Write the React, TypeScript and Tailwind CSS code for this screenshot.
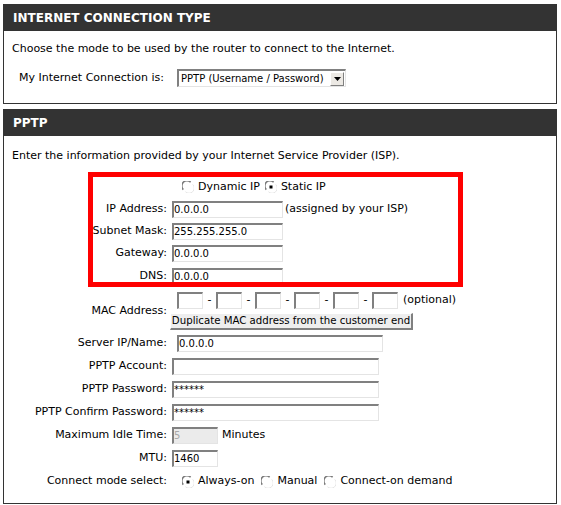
import React from "react";

const FONT = { fontFamily: '"DejaVu Sans", Verdana, sans-serif' };

function Radio({ checked }: { checked?: boolean }) {
  return (
    <svg width="12" height="12" viewBox="0 0 12 12" className="shrink-0">
      <circle cx="6" cy="6" r="5.5" fill="#ffffff" />
      <path d="M1.3 8.6 A5 5 0 0 1 8.6 1.3" stroke="#7a7a7a" strokeWidth="1.6" fill="none" />
      <path d="M10.7 3.4 A5 5 0 0 1 3.4 10.7" stroke="#e6e6e6" strokeWidth="1" fill="none" />
      {checked && <rect x="4.5" y="4.5" width="3" height="3" fill="#000000" />}
    </svg>
  );
}

function TextBox({
  value = "",
  width,
  disabled,
  className = "",
}: {
  value?: string;
  width: string;
  disabled?: boolean;
  className?: string;
}) {
  return (
    <div
      className={`flex h-[17px] items-center border-t-2 border-l-2 border-b border-r border-t-[#808080] border-l-[#808080] border-b-[#e4e4e4] border-r-[#e4e4e4] text-[10px] leading-none ${
        disabled ? "bg-[#ebebeb] text-[#a8a8a8]" : "bg-white text-black"
      } ${width} ${className}`}
    >
      {value}
    </div>
  );
}

function Header({ title }: { title: string }) {
  return (
    <div className="flex h-[26px] items-center bg-[#333333] pl-[9px] text-[12px] font-bold text-white">
      {title}
    </div>
  );
}

function Row({ label, h = "h-[23px]", children }: { label: string; h?: string; children: React.ReactNode }) {
  return (
    <div className={`flex items-center ${h}`}>
      <div className="w-[163px] shrink-0 text-right whitespace-nowrap">{label}</div>
      <div className="ml-[5px] flex items-center">{children}</div>
    </div>
  );
}

export default function App() {
  const macBoxes = [0, 1, 2, 3, 4, 5];
  return (
    <div className="min-h-[505px] w-[561px] bg-white pl-[3px] pt-[4px] text-[11px] text-black" style={FONT}>
      {/* connection type */}
      <div className="w-[554px] border border-[#333333]">
        <Header title="INTERNET CONNECTION TYPE" />
        <div className="px-[8px] pt-[10px] pb-[15px]">
          <div className="h-[16px] leading-[16px] whitespace-nowrap">
            Choose the mode to be used by the router to connect to the Internet.
          </div>
          <div className="mt-[11px] flex h-[20px] items-center pl-[7px]">
            <span className="w-[158px] shrink-0 whitespace-nowrap">My Internet Connection is:</span>
            <div className="flex h-[18px] w-[169px] items-center border-t-2 border-l-2 border-b border-r border-t-[#808080] border-l-[#808080] border-b-[#e4e4e4] border-r-[#e4e4e4] bg-white text-[10px]">
              <span className="flex-1 pl-[2px] whitespace-nowrap">PPTP (Username / Password)</span>
              <div className="mr-[1px] flex h-[14px] w-[14px] items-center justify-center border-t border-l border-r border-b border-t-white border-l-white border-r-[#808080] border-b-[#808080] bg-[#ece9e4]">
                <svg width="7" height="4" viewBox="0 0 7 4">
                  <path d="M0 0 H7 L3.5 4 Z" fill="#000" />
                </svg>
              </div>
            </div>
          </div>
        </div>
      </div>

      {/* pptp */}
      <div className="mt-[5px] w-[554px] border border-[#333333]">
        <Header title="PPTP" />
        <div className="pt-[12px] pb-[10px]">
          <div className="h-[16px] pl-[8px] leading-[16px] whitespace-nowrap">
            Enter the information provided by your Internet Service Provider (ISP).
          </div>

          <div className="relative mt-[12px]">
            <div className="flex h-[22px] items-center">
              <div className="w-[163px] shrink-0" />
              <div className="ml-[15px] flex items-center">
                <Radio />
                <span className="ml-[4px]">Dynamic IP</span>
                <span className="ml-[5px]" />
                <Radio checked />
                <span className="ml-[4px]">Static IP</span>
              </div>
            </div>
            <Row label="IP Address:" h="h-[22px]">
              <TextBox value="0.0.0.0" width="w-[111px]" />
              <span className="ml-[2px]">(assigned by your ISP)</span>
            </Row>
            <Row label="Subnet Mask:" h="h-[22px]">
              <TextBox value="255.255.255.0" width="w-[111px]" />
            </Row>
            <Row label="Gateway:">
              <TextBox value="0.0.0.0" width="w-[111px]" />
            </Row>
            <Row label="DNS:">
              <TextBox value="0.0.0.0" width="w-[111px]" />
            </Row>

            {/* annotation box */}
            <div className="pointer-events-none absolute left-[84px] top-[-4px] h-[115px] w-[375px] border-[5px] border-[#ff0000]" />
          </div>

          <div className="flex h-[44px] items-center">
            <div className="w-[163px] shrink-0 pt-[3px] text-right">MAC Address:</div>
            <div className="ml-[3px] flex flex-col">
              <div className="ml-[2px] flex h-[19px] items-center pl-[5px]">
                {macBoxes.map((i) => (
                  <React.Fragment key={i}>
                    {i > 0 && <span className="w-[13px] text-center">-</span>}
                    <TextBox width="w-[26px]" />
                  </React.Fragment>
                ))}
                <span className="ml-[5px]">(optional)</span>
              </div>
              <div className="mt-[3px] flex h-[17px] w-[243px] items-center justify-center border-t border-l border-r-2 border-b-2 border-t-white border-l-white border-r-[#808080] border-b-[#808080] bg-[#eeeeee] text-[10.2px] whitespace-nowrap">
                Duplicate MAC address from the customer end
              </div>
            </div>
          </div>

          <Row label="Server IP/Name:">
            <TextBox value="0.0.0.0" width="w-[206px]" className="ml-[5px]" />
          </Row>
          <Row label="PPTP Account:">
            <TextBox width="w-[207px]" />
          </Row>
          <Row label="PPTP Password:">
            <TextBox value="******" width="w-[207px]" />
          </Row>
          <Row label="PPTP Confirm Password:">
            <TextBox value="******" width="w-[207px]" />
          </Row>
          <Row label="Maximum Idle Time:">
            <TextBox value="5" width="w-[46px]" disabled />
            <span className="ml-[4px]">Minutes</span>
          </Row>
          <Row label="MTU:">
            <TextBox value="1460" width="w-[46px]" />
          </Row>
          <Row label="Connect mode select:">
            <div className="ml-[10px] flex items-center">
              <Radio checked />
              <span className="ml-[4px]">Always-on</span>
              <span className="ml-[7px]" />
              <Radio />
              <span className="ml-[4px]">Manual</span>
              <span className="ml-[7px]" />
              <Radio />
              <span className="ml-[4px]">Connect-on demand</span>
            </div>
          </Row>
        </div>
      </div>
    </div>
  );
}
